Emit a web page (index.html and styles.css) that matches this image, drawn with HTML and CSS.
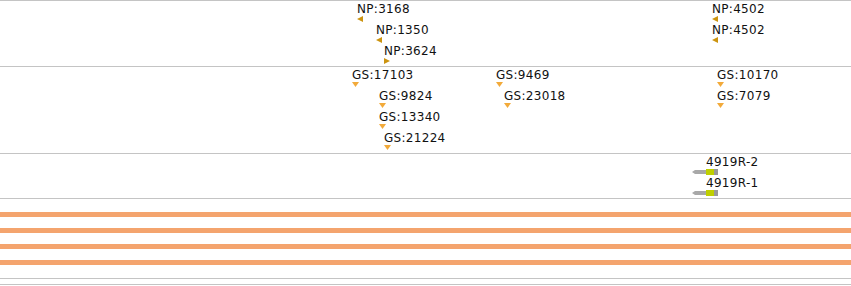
FILE: index.html
```html
<!DOCTYPE html>
<html lang="en">
<head>
    <meta charset="UTF-8">
    <title>Tracks</title>
    <link rel="stylesheet" href="styles.css">
</head>
<body>
    <div class="browser">
        <div class="track track-np">
            <div class="feat" style="left: 357px; top: 0px;">
                <span class="label">NP:3168</span>
                <svg class="tri" width="6" height="6"><polygon class="np" points="0,3 6,0 6,6"/></svg>
            </div>
            <div class="feat" style="left: 376px; top: 21px;">
                <span class="label">NP:1350</span>
                <svg class="tri" width="6" height="6"><polygon class="np" points="0,3 6,0 6,6"/></svg>
            </div>
            <div class="feat" style="left: 384px; top: 42px;">
                <span class="label">NP:3624</span>
                <svg class="tri" width="6" height="6"><polygon class="np" points="6,3 0,0 0,6"/></svg>
            </div>
            <div class="feat" style="left: 712px; top: 0px;">
                <span class="label">NP:4502</span>
                <svg class="tri" width="6" height="6"><polygon class="np" points="0,3 6,0 6,6"/></svg>
            </div>
            <div class="feat" style="left: 712px; top: 21px;">
                <span class="label">NP:4502</span>
                <svg class="tri" width="6" height="6"><polygon class="np" points="0,3 6,0 6,6"/></svg>
            </div>
        </div>

        <div class="track track-gs">
            <div class="feat" style="left: 352px; top: 0px;">
                <span class="label">GS:17103</span>
                <svg class="tri" width="7" height="6"><polygon class="gs" points="0,0 7,0 3.5,5"/></svg>
            </div>
            <div class="feat" style="left: 379px; top: 21px;">
                <span class="label">GS:9824</span>
                <svg class="tri" width="7" height="6"><polygon class="gs" points="0,0 7,0 3.5,5"/></svg>
            </div>
            <div class="feat" style="left: 379px; top: 42px;">
                <span class="label">GS:13340</span>
                <svg class="tri" width="7" height="6"><polygon class="gs" points="0,0 7,0 3.5,5"/></svg>
            </div>
            <div class="feat" style="left: 384px; top: 63px;">
                <span class="label">GS:21224</span>
                <svg class="tri" width="7" height="6"><polygon class="gs" points="0,0 7,0 3.5,5"/></svg>
            </div>
            <div class="feat" style="left: 496px; top: 0px;">
                <span class="label">GS:9469</span>
                <svg class="tri" width="7" height="6"><polygon class="gs" points="0,0 7,0 3.5,5"/></svg>
            </div>
            <div class="feat" style="left: 504px; top: 21px;">
                <span class="label">GS:23018</span>
                <svg class="tri" width="7" height="6"><polygon class="gs" points="0,0 7,0 3.5,5"/></svg>
            </div>
            <div class="feat" style="left: 717px; top: 0px;">
                <span class="label">GS:10170</span>
                <svg class="tri" width="7" height="6"><polygon class="gs" points="0,0 7,0 3.5,5"/></svg>
            </div>
            <div class="feat" style="left: 717px; top: 21px;">
                <span class="label">GS:7079</span>
                <svg class="tri" width="7" height="6"><polygon class="gs" points="0,0 7,0 3.5,5"/></svg>
            </div>
        </div>

        <div class="track track-genes">
            <div class="feat" style="left: 692px; top: 0px;">
                <span class="label gene-label">4919R-2</span>
                <svg class="gene" width="26" height="6">
                    <polygon class="utr" points="0,3 3,1 14,1 14,5 3,5"/>
                    <rect class="cds" x="14" y="0" width="8" height="6"/>
                    <rect class="utr-end" x="22" y="0" width="4" height="6"/>
                </svg>
            </div>
            <div class="feat" style="left: 692px; top: 21px;">
                <span class="label gene-label">4919R-1</span>
                <svg class="gene" width="26" height="6">
                    <polygon class="utr" points="0,3 3,1 14,1 14,5 3,5"/>
                    <rect class="cds" x="14" y="0" width="8" height="6"/>
                    <rect class="utr-end" x="22" y="0" width="4" height="6"/>
                </svg>
            </div>
        </div>

        <div class="track track-bands">
            <div class="band"></div>
            <div class="band"></div>
            <div class="band"></div>
            <div class="band"></div>
        </div>

        <div class="track track-empty"></div>
    </div>
</body>
</html>
```

FILE: styles.css
```css
body {
  margin: 0;
  padding: 0;
  background-color: #fff;
  font-family: "DejaVu Sans", sans-serif;
  font-size: 12px;
  color: #111;
}

.browser {
  width: 851px;
}

.track {
  position: relative;
  box-sizing: border-box;
  border-top: 1px solid #c4c4c4;
}

.track-np {
  height: 66px;
}

.track-gs {
  height: 87px;
}

.track-genes {
  height: 45px;
}

.track-bands {
  height: 80px;
  padding-top: 13px;
  display: flex;
  flex-direction: column;
  gap: 11px;
}

.track-empty {
  height: 7px;
  border-bottom: 1px solid #c4c4c4;
}

.feat {
  position: absolute;
  display: flex;
  flex-direction: column;
  align-items: flex-start;
}

.label {
  display: block;
  padding-top: 1px;
  line-height: 14px;
  letter-spacing: 0.3px;
  white-space: nowrap;
}

.gene-label {
  padding-left: 14px;
}

.tri,
.gene {
  display: block;
}

.np {
  fill: #cc9410;
}

.gs {
  fill: #f2aa3a;
}

.utr {
  fill: #a8a8a8;
}

.cds {
  fill: #bfcf00;
}

.utr-end {
  fill: #999;
}

.band {
  height: 5px;
  background-color: #f4a46e;
}
```
